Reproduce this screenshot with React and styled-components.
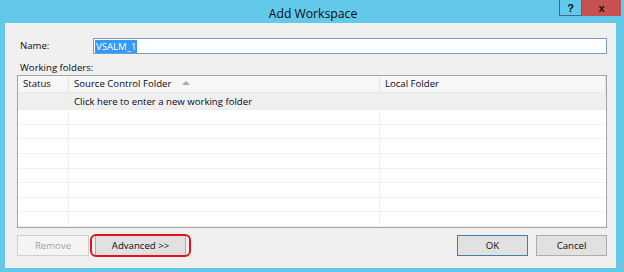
import React from "react";
import styled, { createGlobalStyle } from "styled-components";

const Global = createGlobalStyle`
  html, body { margin: 0; padding: 0; }
  body { background: #63c9ea; font-family: "Open Sans", "Liberation Sans", sans-serif; }
`;

const Window = styled.div`
  width: 624px;
  height: 272px;
  background: #63c9ea;
  display: flex;
  flex-direction: column;
  box-sizing: border-box;
`;

const TitleBar = styled.div`
  height: 23px;
  display: grid;
  grid-template-columns: 1fr auto 1fr;
  align-items: start;
`;

const Title = styled.div`
  grid-column: 2;
  font-size: 12.2px;
  line-height: 27px;
  color: #0c0c0c;
  padding-left: 2px;
`;

const Caption = styled.div`
  grid-column: 3;
  justify-self: end;
  display: flex;
  margin-right: 3px;
`;

const CapButton = styled.div`
  height: 16px;
  width: ${(p) => p.$w}px;
  box-sizing: border-box;
  background: ${(p) => p.$bg};
  border: 1px solid ${(p) => p.$border};
  border-top: none;
  display: flex;
  align-items: center;
  justify-content: center;
  font-family: "Liberation Sans", sans-serif;
  font-weight: bold;
  font-size: 11px;
  color: #111;
`;

const Client = styled.div`
  flex: 1;
  margin: 0 8px 5px 5px;
  background: #f0f0f0;
  padding: 15px 9px 12px 12px;
  display: flex;
  flex-direction: column;
  font-size: 9.6px;
  color: #0a0a14;
  position: relative;
`;

const NameRow = styled.div`
  display: flex;
  align-items: center;
  height: 16px;
`;

const Label = styled.div`
  width: 73px;
  padding-left: 3px;
  line-height: 14px;
`;

const Input = styled.div`
  flex: 1;
  height: 16px;
  box-sizing: border-box;
  border: 1px solid #7a9cc0;
  background: #fff;
  display: flex;
  align-items: center;
  padding-left: 1px;
`;

const Selected = styled.span`
  background: #3399ff;
  color: #fff;
  line-height: 13px;
  padding: 0 1px;
`;

const SectionLabel = styled.div`
  margin-top: 7px;
  padding-left: 3px;
  line-height: 14px;
  height: 14px;
`;

const Table = styled.div`
  height: 153px;
  box-sizing: border-box;
  border: 1px solid #a3a3a3;
  background: #fff;
  display: flex;
  flex-direction: column;
  overflow: hidden;
`;

const cols = "51px 311px 1fr";

const HeaderRow = styled.div`
  display: grid;
  grid-template-columns: ${cols};
  height: 17px;
  background: #f7f7f7;
  border-bottom: 1px solid #e8e8e8;
  box-sizing: border-box;
`;

const HeaderCell = styled.div`
  padding-left: 5px;
  border-right: 1px solid #e3e3e3;
  line-height: 16px;
  display: flex;
  align-items: center;
`;

const SortArrow = styled.span`
  width: 0;
  height: 0;
  border-left: 4px solid transparent;
  border-right: 4px solid transparent;
  border-bottom: 4px solid #a8a8a8;
  margin-left: 11px;
  margin-top: -2px;
`;

const NewRow = styled.div`
  display: grid;
  grid-template-columns: ${cols};
  height: 17px;
  background: #efefef;
  line-height: 17px;
`;

const Cell = styled.div`
  padding-left: 5px;
  border-right: 1px solid ${(p) => (p.$line ? "#f0f0f0" : "transparent")};
`;

const Row = styled.div`
  display: grid;
  grid-template-columns: ${cols};
  height: 16px;
  box-sizing: border-box;
  border-bottom: 1px solid #f0f0f0;
`;

const Buttons = styled.div`
  margin-top: 7px;
  display: flex;
  align-items: center;
  height: 21px;
`;

const Button = styled.div`
  height: 21px;
  width: ${(p) => p.$w}px;
  box-sizing: border-box;
  display: flex;
  align-items: center;
  justify-content: center;
  background: ${(p) => (p.$disabled ? "#f4f4f4" : "#e1e1e1")};
  border: 1px solid ${(p) => (p.$default ? "#3c7fb1" : p.$disabled ? "#cfcfcf" : "#adadad")};
  color: ${(p) => (p.$disabled ? "#a2a2a2" : "#0a0a14")};
  margin-left: ${(p) => p.$ml || 0}px;
  position: relative;
`;

const Highlight = styled.div`
  position: absolute;
  left: -6px;
  top: -2px;
  right: -6px;
  bottom: -2px;
  border: 2px solid #e3121b;
  border-radius: 6px;
`;

const Spacer = styled.div`
  flex: 1;
`;

const Grip = styled.svg`
  position: absolute;
  right: -6px;
  bottom: 2px;
`;

export default function App() {
  const rows = Array.from({ length: 8 });
  return (
    <>
      <Global />
      <Window>
        <TitleBar>
          <Title>Add Workspace</Title>
          <Caption>
            <CapButton $w={23} $bg="#63c9ea" $border="#3a6f86">?</CapButton>
            <CapButton $w={39} $bg="#c75050" $border="#c75050">x</CapButton>
          </Caption>
        </TitleBar>
        <Client>
          <NameRow>
            <Label>Name:</Label>
            <Input>
              <Selected>VSALM_1</Selected>
            </Input>
          </NameRow>
          <SectionLabel>Working folders:</SectionLabel>
          <Table>
            <HeaderRow>
              <HeaderCell>Status</HeaderCell>
              <HeaderCell>
                Source Control Folder
                <SortArrow />
              </HeaderCell>
              <HeaderCell>Local Folder</HeaderCell>
            </HeaderRow>
            <NewRow>
              <Cell />
              <Cell>Click here to enter a new working folder</Cell>
              <Cell />
            </NewRow>
            {rows.map((_, i) => (
              <Row key={i}>
                <Cell $line />
                <Cell $line />
                <Cell />
              </Row>
            ))}
          </Table>
          <Buttons>
            <Button $w={72} $disabled>Remove</Button>
            <Button $w={91} $ml={6}>
              Advanced &gt;&gt;
              <Highlight />
            </Button>
            <Spacer />
            <Button $w={71} $default>OK</Button>
            <Button $w={71} $ml={8}>Cancel</Button>
          </Buttons>
          <Grip width="6" height="6" viewBox="0 0 6 6">
            <rect x="4" y="0" width="1" height="1" fill="#b8b8b8" />
            <rect x="2" y="2" width="1" height="1" fill="#b8b8b8" />
            <rect x="4" y="2" width="1" height="1" fill="#b8b8b8" />
            <rect x="0" y="4" width="1" height="1" fill="#b8b8b8" />
            <rect x="2" y="4" width="1" height="1" fill="#b8b8b8" />
            <rect x="4" y="4" width="1" height="1" fill="#b8b8b8" />
          </Grip>
        </Client>
      </Window>
    </>
  );
}
